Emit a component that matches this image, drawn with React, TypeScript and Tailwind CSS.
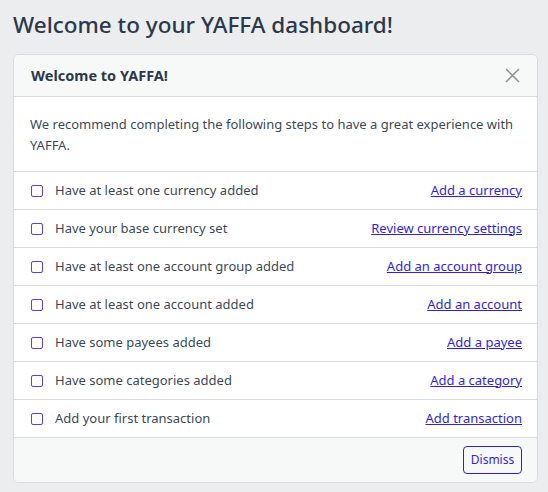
import React from "react";

const rows = [
  ["Have at least one currency added", "Add a currency"],
  ["Have your base currency set", "Review currency settings"],
  ["Have at least one account group added", "Add an account group"],
  ["Have at least one account added", "Add an account"],
  ["Have some payees added", "Add a payee"],
  ["Have some categories added", "Add a category"],
  ["Add your first transaction", "Add transaction"],
];

export default function App() {
  return (
    <div
      className="w-[548px] h-[492px] bg-[#ebedef] text-[rgba(44,56,74,0.95)] overflow-hidden"
      style={{ fontFamily: '"Noto Sans", sans-serif' }}
    >
      <h1 className="pl-[13px] pt-[10px] text-[22.5px] leading-[30px] font-medium text-[#2c384a]">
        Welcome to your YAFFA dashboard!
      </h1>
      <div className="ml-[13px] mr-[10px] mt-[14px] bg-white border border-[#d8dbe0] rounded-[6px] overflow-hidden">
        <div className="h-[42px] bg-[#f7f8f8] border-b border-[#d8dbe0] flex items-center justify-between pl-[17px] pr-[17px]">
          <span className="text-[14.5px] font-bold text-[#2c384a]">Welcome to YAFFA!</span>
          <svg width="15" height="15" viewBox="0 0 15 15" className="text-[#8a8f96]">
            <path d="M1 1 L14 14 M14 1 L1 14" stroke="currentColor" strokeWidth="1.5" />
          </svg>
        </div>
        <div className="px-[16px] pt-[17px] pb-[15px] border-b border-[#d8dbe0] text-[13px] leading-[21px]">
          We recommend completing the following steps to have a great experience with YAFFA.
        </div>
        {rows.map(([label, link], i) => (
          <div
            key={i}
            className="h-[38px] flex items-center justify-between pl-[17px] pr-[15px] text-[13px] border-b border-[#d8dbe0]"
          >
            <div className="flex items-center">
              <span className="w-[12px] h-[12px] border-[1.5px] border-[#5b3fe0] rounded-[2px] mr-[12px]" />
              <span>{label}</span>
            </div>
            <a href="#" className="text-[#321fdb] underline">
              {link}
            </a>
          </div>
        ))}
        <div className="h-[44px] bg-[#f7f8f8] flex items-center justify-end pr-[15px]">
          <button className="h-[28px] w-[59px] border border-[#321fdb] rounded-[4px] text-[#321fdb] text-[12px] bg-transparent">
            Dismiss
          </button>
        </div>
      </div>
    </div>
  );
}
